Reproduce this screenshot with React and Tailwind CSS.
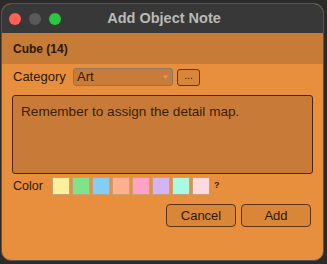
export default function App() {
  const swatches = ["#fdf09c", "#7fe38a", "#84cdf7", "#ffb08e", "#ffa3c6", "#d5b4f5", "#a8fbe0", "#ffd9e0"];
  return (
    <div className="w-[327px] h-[264px] bg-[#2b2b2b] pt-[3px] pl-[1px] overflow-hidden" style={{ fontFamily: '"Liberation Sans", Arial, sans-serif' }}>
      <div className="w-[323px] h-[258px] rounded-[10px] overflow-hidden bg-[#e88f3d] flex flex-col border border-[#555]">
        <div className="h-[29px] bg-[#383838] relative flex items-center shrink-0">
          <div className="flex gap-[8px] pl-[7px]">
            <div className="w-[12px] h-[12px] rounded-full bg-[#fe5f57]" />
            <div className="w-[12px] h-[12px] rounded-full bg-[#5a5a5a]" />
            <div className="w-[12px] h-[12px] rounded-full bg-[#28c840]" />
          </div>
          <div className="absolute inset-0 flex items-center justify-center text-[14.5px] font-bold text-[#b9b9b9] pl-[3px]">Add Object Note</div>
        </div>
        <div className="h-[31px] bg-[#c67b36] flex items-center pl-[11px] text-[12px] font-bold text-[#2e1807] shrink-0">Cube (14)</div>
        <div className="flex flex-col px-[10px]">
          <div className="flex items-center mt-[4px] h-[18px]">
            <span className="text-[13px] text-[#2e1807] ml-[1px] w-[60px]">Category</span>
            <div className="w-[100px] h-[18px] bg-[#c97c39] border border-[#8c7665] rounded-[3px] flex items-center justify-between px-[3px]">
              <span className="text-[13px] text-[#2e1807]">Art</span>
              <svg width="7" height="5" viewBox="0 0 7 5"><path d="M0.5 0.5 L3.5 4 L6.5 0.5" fill="#d49a68" /></svg>
            </div>
            <div className="ml-[4px] w-[23px] h-[17px] bg-[#d98638] border border-[#5c3313] rounded-[3px] flex items-center justify-center text-[10px] text-[#2e1807] leading-none pb-[3px]">...</div>
          </div>
          <div className="mt-[9px] h-[79px] bg-[#c87b38] border border-[#4a2608] rounded-[3px] px-[8px] pt-[6px] text-[13.6px] text-[#3a1e08]">
            Remember to assign the detail map.
          </div>
          <div className="flex items-center mt-[3px] h-[18px]">
            <span className="text-[12.5px] text-[#2e1807] ml-[1px] w-[39px]">Color</span>
            <div className="flex gap-[2px]">
              {swatches.map((c, i) => (
                <div key={i} className="w-[18px] h-[18px] border border-[#c9a074]" style={{ backgroundColor: c }} />
              ))}
            </div>
            <span className="ml-[4px] text-[9px] font-bold text-[#3a1e08]">?</span>
          </div>
          <div className="flex justify-end gap-[5px] mt-[9px] mr-[2px]">
            <div className="w-[70px] h-[23px] bg-[#d98638] border border-[#5c3313] rounded-[4px] flex items-center justify-center text-[13px] text-[#2e1807]">Cancel</div>
            <div className="w-[70px] h-[23px] bg-[#d98638] border border-[#5c3313] rounded-[4px] flex items-center justify-center text-[13px] text-[#2e1807]">Add</div>
          </div>
        </div>
      </div>
    </div>
  );
}
